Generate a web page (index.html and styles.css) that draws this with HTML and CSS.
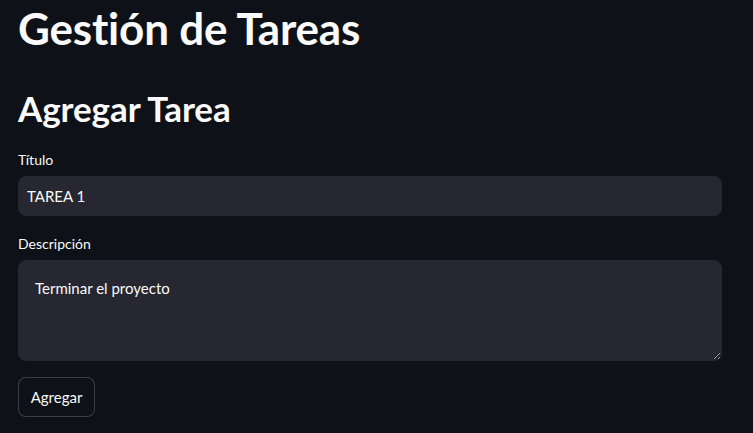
FILE: index.html
```html
<!DOCTYPE html>
<html lang="es">
<head>
<meta charset="utf-8">
<link rel="stylesheet" href="styles.css">
</head>
<body>
<main class="page">
  <h1 class="title">Gestión de Tareas</h1>
  <h2 class="subtitle">Agregar Tarea</h2>
  <div class="field">
    <label class="label" for="titulo">Título</label>
    <input class="input" id="titulo" type="text" value="TAREA 1">
  </div>
  <div class="field field-desc">
    <label class="label" for="desc">Descripción</label>
    <textarea class="textarea" id="desc">Terminar el proyecto</textarea>
  </div>
  <button class="button" type="button">Agregar</button>
</main>
</body>
</html>
```

FILE: styles.css
```css
html, body {
  margin: 0;
  padding: 0;
  background: #0e1117;
  color: #fafafa;
  font-family: Lato, "Noto Sans", sans-serif;
}
.page {
  width: 704px;
  padding: 0 0 0 18px;
  display: flex;
  flex-direction: column;
  align-items: flex-start;
}
.title {
  margin: 0;
  height: 62px;
  line-height: 56px;
  font-size: 44px;
  font-weight: 700;
  letter-spacing: -0.2px;
}
.subtitle {
  margin: 22px 0 0 0;
  height: 48px;
  line-height: 48px;
  font-size: 35px;
  font-weight: 700;
  letter-spacing: -0.1px;
}
.field {
  display: flex;
  flex-direction: column;
  width: 100%;
  margin-top: 18px;
}
.field-desc {
  margin-top: 18px;
}
.label {
  font-size: 14px;
  line-height: 20px;
  height: 26px;
}
.input {
  box-sizing: border-box;
  width: 100%;
  height: 40px;
  background: #262730;
  border: 1px solid #262730;
  border-radius: 8px;
  color: #fafafa;
  font-family: inherit;
  font-size: 15px;
  padding: 0 8px;
  outline: none;
}
.textarea {
  box-sizing: border-box;
  width: 100%;
  height: 101px;
  background: #262730;
  border: 1px solid #262730;
  border-radius: 8px;
  color: #fafafa;
  font-family: inherit;
  font-size: 15px;
  line-height: 22px;
  padding: 16px 16px;
  outline: none;
  resize: vertical;
}
.button {
  margin-top: 16px;
  box-sizing: border-box;
  width: 77px;
  height: 40px;
  background: #0e1117;
  border: 1px solid rgba(250, 250, 250, 0.2);
  border-radius: 8px;
  color: #fafafa;
  font-family: inherit;
  font-size: 15px;
  padding: 0;
}
```
